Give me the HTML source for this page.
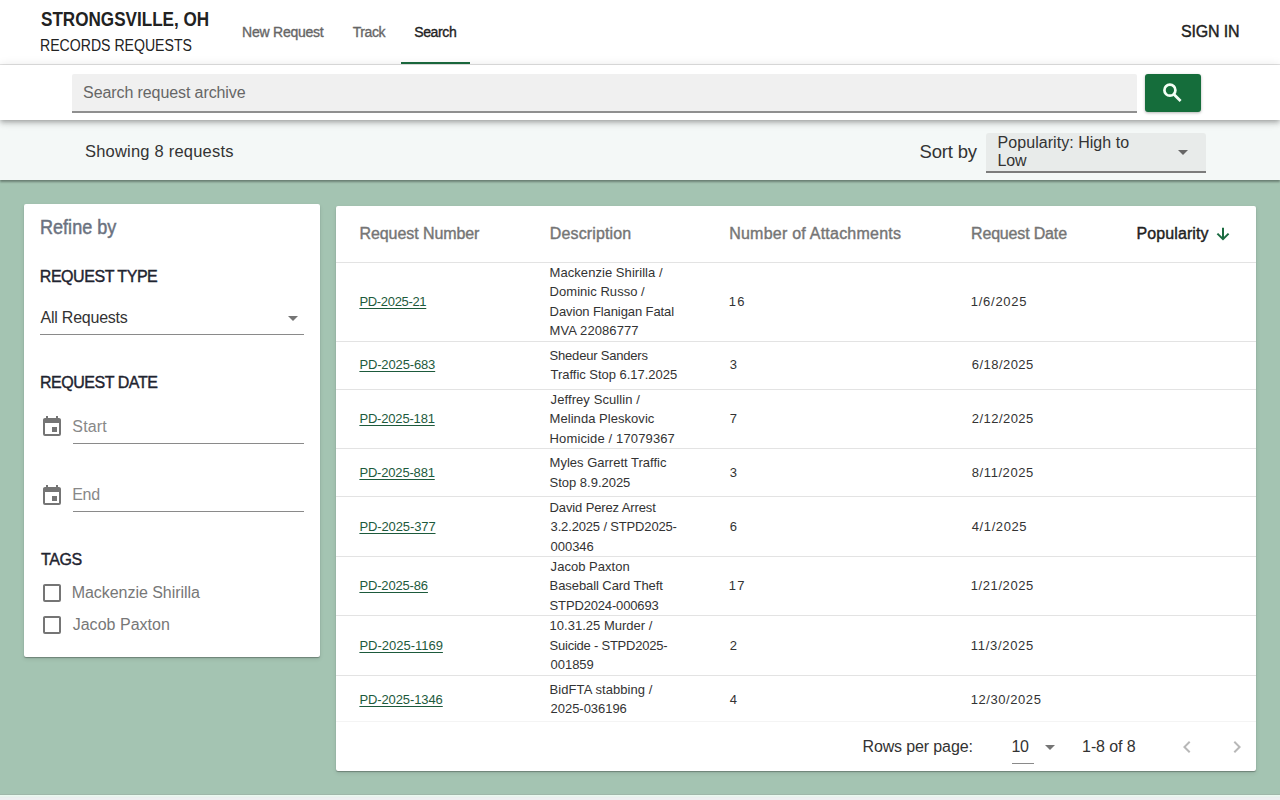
<!DOCTYPE html>
<html><head><meta charset="utf-8"><title>Strongsville, OH Records Requests</title>
<style>
html,body{margin:0;padding:0;}
body{width:1280px;height:800px;overflow:hidden;position:relative;background:#a4c4b2;font-family:"Liberation Sans",sans-serif;}
.bx{position:absolute;}
.t{position:absolute;white-space:pre;}
.ic{position:absolute;overflow:visible;}
.pd{text-decoration:underline;text-underline-offset:2px;text-decoration-thickness:1px;}
</style></head><body>
<div class="bx" style="left:0;top:0;width:1280px;height:64px;background:#fff;border-bottom:1px solid #e4e4e4"></div>
<div class="bx" style="left:401px;top:62px;width:69px;height:2px;background:#1b6b3f"></div>
<div class="bx" style="left:0;top:120px;width:1280px;height:60px;background:#f4f8f7;box-shadow:0 2px 2px rgba(0,0,0,.35)"></div>
<div class="bx" style="left:0;top:65px;width:1280px;height:55px;background:#fff;box-shadow:0 2px 4px -1px rgba(0,0,0,.2),0 4px 5px 0 rgba(0,0,0,.12),0 1px 10px 0 rgba(0,0,0,.12)"></div>
<div class="bx" style="left:72px;top:74px;width:1065px;height:37px;background:#f0f0f0;border-radius:2px 2px 0 0"></div><div class="bx" style="left:72px;top:111px;width:1065px;height:2px;background:#8f8f8f"></div>
<div class="bx" style="left:1145px;top:74px;width:56px;height:38px;background:#156d3b;border-radius:3px;box-shadow:0 1px 3px rgba(0,0,0,.3)"></div>
<div class="bx" style="left:986px;top:133px;width:220px;height:38px;background:#e8ebea;border-radius:3px 3px 0 0"></div><div class="bx" style="left:986px;top:171px;width:220px;height:2px;background:#7c7c7c"></div>
<div class="bx" style="left:0;top:794px;width:1280px;height:1px;background:#9fb7a9"></div><div class="bx" style="left:0;top:795px;width:1280px;height:5px;background:linear-gradient(#ebf9f0 0,#ebf9f0 1px,#e8eeec 2px,#eeeff1 3px)"></div>
<div class="bx" style="left:24px;top:204px;width:296px;height:453px;background:#fff;border-radius:2px;box-shadow:0 1px 1px rgba(0,0,0,.28),0 2px 4px rgba(0,0,0,.1)"></div>
<div class="bx" style="left:40px;top:334px;width:264px;height:1px;background:#8a8a8a"></div>
<div class="bx" style="left:73px;top:443px;width:231px;height:1px;background:#8a8a8a"></div>
<div class="bx" style="left:73px;top:511px;width:231px;height:1px;background:#8a8a8a"></div>
<div class="bx" style="left:336px;top:206px;width:920px;height:565px;background:#fff;border-radius:2px;box-shadow:0 1px 1px rgba(0,0,0,.28),0 2px 4px rgba(0,0,0,.1)"></div>
<div class="bx" style="left:336px;top:262px;width:920px;height:1px;background:#e3e3e3"></div>
<div class="bx" style="left:336px;top:341px;width:920px;height:1px;background:#e3e3e3"></div>
<div class="bx" style="left:336px;top:389px;width:920px;height:1px;background:#e3e3e3"></div>
<div class="bx" style="left:336px;top:448px;width:920px;height:1px;background:#e3e3e3"></div>
<div class="bx" style="left:336px;top:496px;width:920px;height:1px;background:#e3e3e3"></div>
<div class="bx" style="left:336px;top:556px;width:920px;height:1px;background:#e3e3e3"></div>
<div class="bx" style="left:336px;top:615px;width:920px;height:1px;background:#e3e3e3"></div>
<div class="bx" style="left:336px;top:675px;width:920px;height:1px;background:#e3e3e3"></div>
<div class="bx" style="left:336px;top:721px;width:920px;height:1px;background:#f4f4f4"></div>
<div class="bx" style="left:1012px;top:763px;width:22px;height:1px;background:#8a8a8a"></div>
<svg class="ic" style="left:0;top:0;width:1280px;height:800px" viewBox="0 0 1280 800">
<circle cx="1169.9" cy="90.2" r="5.5" fill="none" stroke="#f4fff6" stroke-width="2.7"/>
<line x1="1173.8" y1="94.2" x2="1180.6" y2="101" stroke="#f4fff6" stroke-width="2.8"/>
<line x1="1223" y1="227.8" x2="1223" y2="238" stroke="#1b6b40" stroke-width="2"/>
<polyline points="1217.4,233.6 1223,239.2 1228.6,233.6" fill="none" stroke="#1b6b40" stroke-width="2"/>
</svg><svg class="ic" style="left:1171px;top:140px;width:24px;height:24px" viewBox="0 0 24 24"><path fill="#666" d="M7,10L12,15L17,10H7Z"/></svg>
<svg class="ic" style="left:281px;top:306px;width:24px;height:24px" viewBox="0 0 24 24"><path fill="#757575" d="M7,10L12,15L17,10H7Z"/></svg>
<svg class="ic" style="left:40px;top:415px;width:24px;height:24px" viewBox="0 0 24 24"><path fill="#757575" d="M19,19H5V8H19M16,1V3H8V1H6V3H5C3.89,3 3,3.89 3,5V19A2,2 0 0,0 5,21H19A2,2 0 0,0 21,19V5C21,3.89 20.1,3 19,3H18V1M17,12H12V17H17V12Z"/></svg>
<svg class="ic" style="left:40px;top:484px;width:24px;height:24px" viewBox="0 0 24 24"><path fill="#757575" d="M19,19H5V8H19M16,1V3H8V1H6V3H5C3.89,3 3,3.89 3,5V19A2,2 0 0,0 5,21H19A2,2 0 0,0 21,19V5C21,3.89 20.1,3 19,3H18V1M17,12H12V17H17V12Z"/></svg>
<svg class="ic" style="left:40px;top:581px;width:24px;height:24px" viewBox="0 0 24 24"><path fill="#757575" d="M19,3H5C3.89,3 3,3.89 3,5V19A2,2 0 0,0 5,21H19A2,2 0 0,0 21,19V5C21,3.89 20.1,3 19,3M19,5V19H5V5H19Z"/></svg>
<svg class="ic" style="left:40px;top:613px;width:24px;height:24px" viewBox="0 0 24 24"><path fill="#757575" d="M19,3H5C3.89,3 3,3.89 3,5V19A2,2 0 0,0 5,21H19A2,2 0 0,0 21,19V5C21,3.89 20.1,3 19,3M19,5V19H5V5H19Z"/></svg>
<svg class="ic" style="left:1038px;top:735px;width:24px;height:24px" viewBox="0 0 24 24"><path fill="#757575" d="M7,10L12,15L17,10H7Z"/></svg>
<svg class="ic" style="left:1175px;top:735px;width:24px;height:24px" viewBox="0 0 24 24"><path fill="#b8b8b8" d="M15.41,16.58L10.83,12L15.41,7.41L14,6L8,12L14,18L15.41,16.58Z"/></svg>
<svg class="ic" style="left:1225.2px;top:735px;width:24px;height:24px" viewBox="0 0 24 24"><path fill="#b8b8b8" d="M8.59,16.58L13.17,12L8.59,7.41L10,6L16,12L10,18L8.59,16.58Z"/></svg>
<div class="t" style="left:40.60px;top:9.80px;font-size:19.5px;line-height:19.5px;color:#222;transform:scaleX(0.8770);transform-origin:0 0;font-weight:bold;">STRONGSVILLE, OH</div>
<div class="t" style="left:39.72px;top:37.80px;font-size:16px;line-height:16px;color:#222;transform:scaleX(0.8807);transform-origin:0 0;">RECORDS REQUESTS</div>
<div class="t" style="left:242.10px;top:24.60px;font-size:14px;line-height:14px;color:#666;letter-spacing:-0.240px;-webkit-text-stroke:0.35px #666;">New Request</div>
<div class="t" style="left:352.70px;top:24.60px;font-size:14px;line-height:14px;color:#666;letter-spacing:-0.400px;-webkit-text-stroke:0.35px #666;">Track</div>
<div class="t" style="left:414.20px;top:24.60px;font-size:14px;line-height:14px;color:#222;letter-spacing:-0.360px;-webkit-text-stroke:0.35px #222;">Search</div>
<div class="t" style="left:1180.90px;top:23.60px;font-size:16px;line-height:16px;color:#222;letter-spacing:-0.133px;-webkit-text-stroke:0.4px #222;">SIGN IN</div>
<div class="t" style="left:83.10px;top:84.80px;font-size:16px;line-height:16px;color:#666;letter-spacing:-0.095px;">Search request archive</div>
<div class="t" style="left:85.00px;top:142.60px;font-size:16.5px;line-height:16.5px;color:#333;letter-spacing:0.206px;">Showing 8 requests</div>
<div class="t" style="left:919.50px;top:142.70px;font-size:18.5px;line-height:18.5px;color:#333;letter-spacing:-0.167px;">Sort by</div>
<div class="t" style="left:997.60px;top:135.30px;font-size:16px;line-height:16px;color:#333;letter-spacing:0.044px;">Popularity: High to</div>
<div class="t" style="left:997.60px;top:152.60px;font-size:16px;line-height:16px;color:#333;letter-spacing:-0.200px;">Low</div>
<div class="t" style="left:39.87px;top:218.00px;font-size:19.5px;line-height:19.5px;color:#6b7280;transform:scaleX(0.9268);transform-origin:0 0;-webkit-text-stroke:0.45px #6b7280;">Refine by</div>
<div class="t" style="left:39.80px;top:268.70px;font-size:16px;line-height:16px;color:#1f2430;letter-spacing:-0.455px;-webkit-text-stroke:0.4px #1f2430;">REQUEST TYPE</div>
<div class="t" style="left:40.50px;top:310.00px;font-size:16px;line-height:16px;color:#333;letter-spacing:-0.227px;">All Requests</div>
<div class="t" style="left:39.90px;top:375.00px;font-size:16px;line-height:16px;color:#1f2430;letter-spacing:-0.455px;-webkit-text-stroke:0.4px #1f2430;">REQUEST DATE</div>
<div class="t" style="left:72.30px;top:418.70px;font-size:16px;line-height:16px;color:#888;letter-spacing:0.175px;">Start</div>
<div class="t" style="left:72.30px;top:487.00px;font-size:16px;line-height:16px;color:#888;letter-spacing:-0.350px;">End</div>
<div class="t" style="left:40.90px;top:552.20px;font-size:16px;line-height:16px;color:#1f2430;letter-spacing:-0.333px;-webkit-text-stroke:0.4px #1f2430;">TAGS</div>
<div class="t" style="left:71.70px;top:585.00px;font-size:16px;line-height:16px;color:#777;letter-spacing:-0.041px;">Mackenzie Shirilla</div>
<div class="t" style="left:72.70px;top:616.70px;font-size:16px;line-height:16px;color:#777;letter-spacing:0.018px;">Jacob Paxton</div>
<div class="t" style="left:359.50px;top:225.90px;font-size:16px;line-height:16px;color:#757575;letter-spacing:-0.077px;-webkit-text-stroke:0.4px #757575;">Request Number</div>
<div class="t" style="left:549.80px;top:225.90px;font-size:16px;line-height:16px;color:#757575;letter-spacing:0.140px;-webkit-text-stroke:0.4px #757575;">Description</div>
<div class="t" style="left:729.20px;top:225.90px;font-size:16px;line-height:16px;color:#757575;letter-spacing:0.230px;-webkit-text-stroke:0.4px #757575;">Number of Attachments</div>
<div class="t" style="left:971.00px;top:225.90px;font-size:16px;line-height:16px;color:#757575;letter-spacing:-0.164px;-webkit-text-stroke:0.4px #757575;">Request Date</div>
<div class="t" style="left:1136.60px;top:225.90px;font-size:16px;line-height:16px;color:#222;letter-spacing:0.089px;-webkit-text-stroke:0.4px #222;">Popularity</div>
<div class="t" style="left:862.50px;top:738.80px;font-size:16px;line-height:16px;color:#333;letter-spacing:-0.131px;">Rows per page:</div>
<div class="t" style="left:1011.50px;top:738.80px;font-size:16px;line-height:16px;color:#333;letter-spacing:-0.300px;">10</div>
<div class="t" style="left:1082.10px;top:738.80px;font-size:16px;line-height:16px;color:#333;letter-spacing:-0.100px;">1-8 of 8</div>
<div class="t pd" style="left:359.40px;top:295.00px;font-size:13px;line-height:13px;color:#1d5a3c;letter-spacing:-0.322px;">PD-2025-21</div>
<div class="t" style="left:549.60px;top:266.00px;font-size:13px;line-height:13px;color:#333;letter-spacing:0.053px;">Mackenzie Shirilla /</div>
<div class="t" style="left:549.60px;top:285.00px;font-size:13px;line-height:13px;color:#333;letter-spacing:0.036px;">Dominic Russo /</div>
<div class="t" style="left:549.60px;top:305.00px;font-size:13px;line-height:13px;color:#333;letter-spacing:-0.100px;">Davion Flanigan Fatal</div>
<div class="t" style="left:549.60px;top:324.00px;font-size:13px;line-height:13px;color:#333;letter-spacing:0.091px;">MVA 22086777</div>
<div class="t" style="left:728.80px;top:295.00px;font-size:13px;line-height:13px;color:#333;letter-spacing:1.200px;">16</div>
<div class="t" style="left:970.80px;top:295.00px;font-size:13px;line-height:13px;color:#333;letter-spacing:0.729px;">1/6/2025</div>
<div class="t pd" style="left:359.40px;top:358.00px;font-size:13px;line-height:13px;color:#1d5a3c;letter-spacing:-0.140px;">PD-2025-683</div>
<div class="t" style="left:549.60px;top:349.00px;font-size:13px;line-height:13px;color:#333;letter-spacing:-0.200px;">Shedeur Sanders</div>
<div class="t" style="left:550.60px;top:368.00px;font-size:13px;line-height:13px;color:#333;letter-spacing:-0.029px;">Traffic Stop 6.17.2025</div>
<div class="t" style="left:729.80px;top:358.00px;font-size:13px;line-height:13px;color:#333;letter-spacing:0.000px;">3</div>
<div class="t" style="left:971.80px;top:358.00px;font-size:13px;line-height:13px;color:#333;letter-spacing:0.450px;">6/18/2025</div>
<div class="t pd" style="left:359.40px;top:412.00px;font-size:13px;line-height:13px;color:#1d5a3c;letter-spacing:-0.180px;">PD-2025-181</div>
<div class="t" style="left:550.60px;top:393.00px;font-size:13px;line-height:13px;color:#333;letter-spacing:0.081px;">Jeffrey Scullin /</div>
<div class="t" style="left:549.60px;top:412.00px;font-size:13px;line-height:13px;color:#333;letter-spacing:0.044px;">Melinda Pleskovic</div>
<div class="t" style="left:549.60px;top:432.00px;font-size:13px;line-height:13px;color:#333;letter-spacing:0.133px;">Homicide / 17079367</div>
<div class="t" style="left:729.80px;top:412.00px;font-size:13px;line-height:13px;color:#333;letter-spacing:0.000px;">7</div>
<div class="t" style="left:971.80px;top:412.00px;font-size:13px;line-height:13px;color:#333;letter-spacing:0.450px;">2/12/2025</div>
<div class="t pd" style="left:359.40px;top:466.00px;font-size:13px;line-height:13px;color:#1d5a3c;letter-spacing:-0.180px;">PD-2025-881</div>
<div class="t" style="left:549.60px;top:456.00px;font-size:13px;line-height:13px;color:#333;letter-spacing:0.000px;">Myles Garrett Traffic</div>
<div class="t" style="left:549.60px;top:476.00px;font-size:13px;line-height:13px;color:#333;letter-spacing:-0.017px;">Stop 8.9.2025</div>
<div class="t" style="left:729.80px;top:466.00px;font-size:13px;line-height:13px;color:#333;letter-spacing:0.000px;">3</div>
<div class="t" style="left:971.80px;top:466.00px;font-size:13px;line-height:13px;color:#333;letter-spacing:0.575px;">8/11/2025</div>
<div class="t pd" style="left:359.40px;top:520.00px;font-size:13px;line-height:13px;color:#1d5a3c;letter-spacing:-0.110px;">PD-2025-377</div>
<div class="t" style="left:549.60px;top:501.00px;font-size:13px;line-height:13px;color:#333;letter-spacing:-0.129px;">David Perez Arrest</div>
<div class="t" style="left:550.60px;top:520.00px;font-size:13px;line-height:13px;color:#333;letter-spacing:-0.158px;">3.2.2025 / STPD2025-</div>
<div class="t" style="left:550.60px;top:540.00px;font-size:13px;line-height:13px;color:#333;letter-spacing:-0.040px;">000346</div>
<div class="t" style="left:729.80px;top:520.00px;font-size:13px;line-height:13px;color:#333;letter-spacing:0.000px;">6</div>
<div class="t" style="left:971.80px;top:520.00px;font-size:13px;line-height:13px;color:#333;letter-spacing:0.586px;">4/1/2025</div>
<div class="t pd" style="left:359.40px;top:579.00px;font-size:13px;line-height:13px;color:#1d5a3c;letter-spacing:-0.156px;">PD-2025-86</div>
<div class="t" style="left:550.60px;top:560.00px;font-size:13px;line-height:13px;color:#333;letter-spacing:0.036px;">Jacob Paxton</div>
<div class="t" style="left:549.60px;top:579.00px;font-size:13px;line-height:13px;color:#333;letter-spacing:-0.078px;">Baseball Card Theft</div>
<div class="t" style="left:549.60px;top:599.00px;font-size:13px;line-height:13px;color:#333;letter-spacing:-0.157px;">STPD2024-000693</div>
<div class="t" style="left:728.80px;top:579.00px;font-size:13px;line-height:13px;color:#333;letter-spacing:1.200px;">17</div>
<div class="t" style="left:970.80px;top:579.00px;font-size:13px;line-height:13px;color:#333;letter-spacing:0.575px;">1/21/2025</div>
<div class="t pd" style="left:359.40px;top:639.00px;font-size:13px;line-height:13px;color:#1d5a3c;letter-spacing:-0.009px;">PD-2025-1169</div>
<div class="t" style="left:549.60px;top:619.00px;font-size:13px;line-height:13px;color:#333;letter-spacing:0.013px;">10.31.25 Murder /</div>
<div class="t" style="left:549.60px;top:639.00px;font-size:13px;line-height:13px;color:#333;letter-spacing:-0.233px;">Suicide - STPD2025-</div>
<div class="t" style="left:550.60px;top:658.00px;font-size:13px;line-height:13px;color:#333;letter-spacing:-0.040px;">001859</div>
<div class="t" style="left:729.80px;top:639.00px;font-size:13px;line-height:13px;color:#333;letter-spacing:0.000px;">2</div>
<div class="t" style="left:970.80px;top:639.00px;font-size:13px;line-height:13px;color:#333;letter-spacing:0.700px;">11/3/2025</div>
<div class="t pd" style="left:359.40px;top:693.00px;font-size:13px;line-height:13px;color:#1d5a3c;letter-spacing:-0.100px;">PD-2025-1346</div>
<div class="t" style="left:549.60px;top:683.00px;font-size:13px;line-height:13px;color:#333;letter-spacing:0.075px;">BidFTA stabbing /</div>
<div class="t" style="left:550.60px;top:702.00px;font-size:13px;line-height:13px;color:#333;letter-spacing:-0.040px;">2025-036196</div>
<div class="t" style="left:729.80px;top:693.00px;font-size:13px;line-height:13px;color:#333;letter-spacing:0.000px;">4</div>
<div class="t" style="left:970.80px;top:693.00px;font-size:13px;line-height:13px;color:#333;letter-spacing:0.556px;">12/30/2025</div>
</body></html>
